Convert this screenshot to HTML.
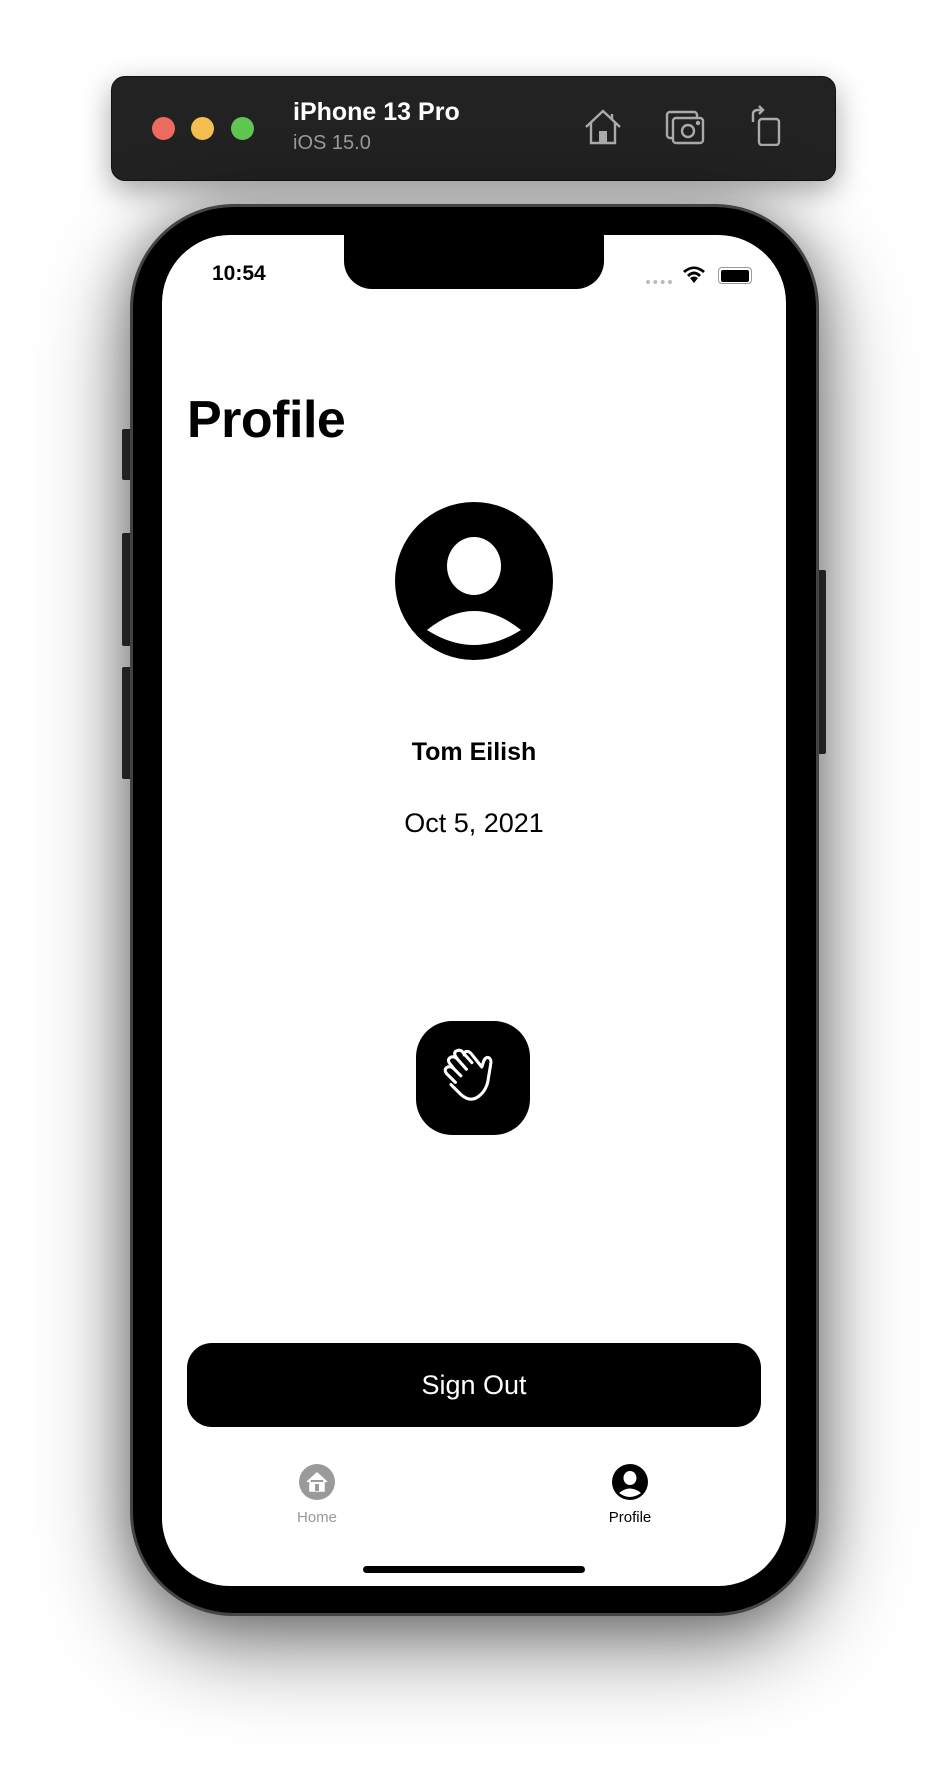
<!DOCTYPE html>
<html><head><meta charset="utf-8"><style>
html,body{margin:0;padding:0;background:#fff;}
body{width:948px;height:1770px;position:relative;overflow:hidden;font-family:"Liberation Sans",sans-serif;}
.abs{position:absolute;}
.bar{left:111px;top:76px;width:725px;height:105px;background:#222;border-radius:14px;border:1px solid #111;box-shadow:0 10px 30px rgba(0,0,0,.35);box-sizing:border-box;}
.dot{width:23px;height:23px;border-radius:50%;top:117px;}
.phone{left:130px;top:204px;width:689px;height:1412px;border-radius:104px;background:#000;border:3px solid #444;box-sizing:border-box;box-shadow:0 30px 90px rgba(0,0,0,.5),0 0 50px rgba(0,0,0,.3);}
.screen{left:162px;top:235px;width:624px;height:1351px;border-radius:68px;background:#fff;overflow:hidden;}
.btn{background:#333;border-radius:2px;}
</style></head><body>
<div class="abs bar"></div>
<div class="abs dot" style="left:152px;background:#ec6a5e"></div>
<div class="abs dot" style="left:191px;background:#f4bf4f"></div>
<div class="abs dot" style="left:231px;background:#61c554"></div>
<div class="abs" style="left:293px;top:98px;color:#fff;font-weight:bold;font-size:25px;">iPhone 13 Pro</div>
<div class="abs" style="left:293px;top:132px;color:#9a9a9a;font-size:20px;">iOS 15.0</div>
<svg class="abs" style="left:582px;top:106px" width="42" height="42" viewBox="0 0 42 42" fill="none" stroke="#aaa" stroke-width="2.4"><path d="M4 21 L21 5 L38 21 M9 17 V37 H33 V17 M30 8 V14"/><rect x="17" y="25" width="8" height="12" fill="#aaa" stroke="none"/></svg>
<svg class="abs" style="left:664px;top:108px" width="42" height="40" viewBox="0 0 42 40" fill="none" stroke="#aaa" stroke-width="2.4"><rect x="3" y="4" width="30" height="26" rx="3"/><rect x="9" y="10" width="30" height="25" rx="3" fill="#222"/><circle cx="24" cy="23" r="6"/><circle cx="34" cy="15" r="1" fill="#aaa"/></svg>
<svg class="abs" style="left:747px;top:104px" width="36" height="42" viewBox="0 0 36 42" fill="none" stroke="#aaa" stroke-width="2.4"><rect x="12" y="15" width="20" height="26" rx="3"/><path d="M6 18 V10 Q6 6 11 6 H15 M12 2 L16 6 L12 10"/></svg>

<div class="abs btn" style="left:122px;top:429px;width:9px;height:51px"></div>
<div class="abs btn" style="left:122px;top:533px;width:9px;height:113px"></div>
<div class="abs btn" style="left:122px;top:667px;width:9px;height:112px"></div>
<div class="abs btn" style="left:818px;top:570px;width:8px;height:184px"></div>
<div class="abs phone"></div>
<div class="abs screen">
  <div class="abs" style="left:182px;top:-2px;width:260px;height:56px;background:#000;border-radius:0 0 28px 28px;"></div>
  <div class="abs" style="left:50px;top:27px;font-weight:bold;font-size:21px;">10:54</div>
  <div class="abs" style="left:484px;top:45px;width:26px;height:4px;border-top:4px dotted #bbb;"></div>
  <svg class="abs" style="left:520px;top:30px" width="24" height="20" viewBox="0 0 24 20"><path d="M12 18 L8 13 Q12 10 16 13 Z M5 10 Q12 3 19 10 L17 12 Q12 7 7 12 Z M1 6 Q12 -3 23 6 L21 8 Q12 0 3 8 Z" fill="#000"/></svg>
  <div class="abs" style="left:556px;top:32px;width:32px;height:15px;border:1.5px solid #999;border-radius:4px;"></div>
  <div class="abs" style="left:559px;top:35px;width:28px;height:12px;background:#000;border-radius:2px;"></div>
  <div class="abs" style="left:25px;top:155px;font-weight:bold;font-size:52px;letter-spacing:-0.5px;">Profile</div>
  <svg class="abs" style="left:233px;top:267px" width="158" height="158" viewBox="0 0 158 158"><circle cx="79" cy="79" r="79" fill="#000"/><ellipse cx="79" cy="64" rx="27" ry="29" fill="#fff"/><path d="M32 128 Q79 90 126 128 Q79 158 32 128 Z" fill="#fff"/></svg>
  <div class="abs" style="left:0;width:624px;top:503px;text-align:center;font-weight:bold;font-size:25px;">Tom Eilish</div>
  <div class="abs" style="left:0;width:624px;top:573px;text-align:center;font-size:27px;">Oct 5, 2021</div>
  <div class="abs" style="left:254px;top:786px;width:114px;height:114px;background:#000;border-radius:36px;"></div>
  <svg class="abs" style="left:278px;top:810px" width="66" height="66" viewBox="0 0 60 60" fill="none" stroke="#fff" stroke-width="2.8" stroke-linecap="round" stroke-linejoin="round"><path d="M14 34 L6 26 Q3 22 7 20 Q10 19 13 22 L19 28 M13 22 L9 17 Q6 13 10 11 Q13 10 16 13 L24 22 M16 13 L14 10 Q12 6 16 5 Q19 4 21 7 L29 16 M22 9 Q22 5 26 6 Q28 7 30 10 L38 20 L40 14 Q42 10 45 12 Q47 14 46 18 L44 30 Q43 40 36 46 Q28 53 19 45 L10 36"/></svg>
  <div class="abs" style="left:25px;top:1108px;width:574px;height:84px;background:#000;border-radius:25px;color:#fff;font-size:27px;text-align:center;line-height:84px;">Sign Out</div>
  <svg class="abs" style="left:137px;top:1229px" width="36" height="36" viewBox="0 0 36 36"><circle cx="18" cy="18" r="18" fill="#9a9a9a"/><path d="M8 18 L18 9 L28 18 M11 16 V27 H25 V16" fill="#fff" stroke="#fff" stroke-width="1.5"/><rect x="16" y="20" width="4" height="7" fill="#9a9a9a"/></svg>
  <div class="abs" style="left:105px;width:100px;top:1274px;text-align:center;font-size:15px;color:#999;">Home</div>
  <svg class="abs" style="left:450px;top:1229px" width="36" height="36" viewBox="0 0 36 36"><circle cx="18" cy="18" r="18" fill="#000"/><ellipse cx="18" cy="14" rx="6.5" ry="7" fill="#fff"/><path d="M7 29 Q18 20 29 29 Q18 37 7 29 Z" fill="#fff"/></svg>
  <div class="abs" style="left:418px;width:100px;top:1274px;text-align:center;font-size:15px;color:#000;">Profile</div>
  <div class="abs" style="left:201px;top:1331px;width:222px;height:7px;background:#000;border-radius:4px;"></div>
</div>
</body></html>
